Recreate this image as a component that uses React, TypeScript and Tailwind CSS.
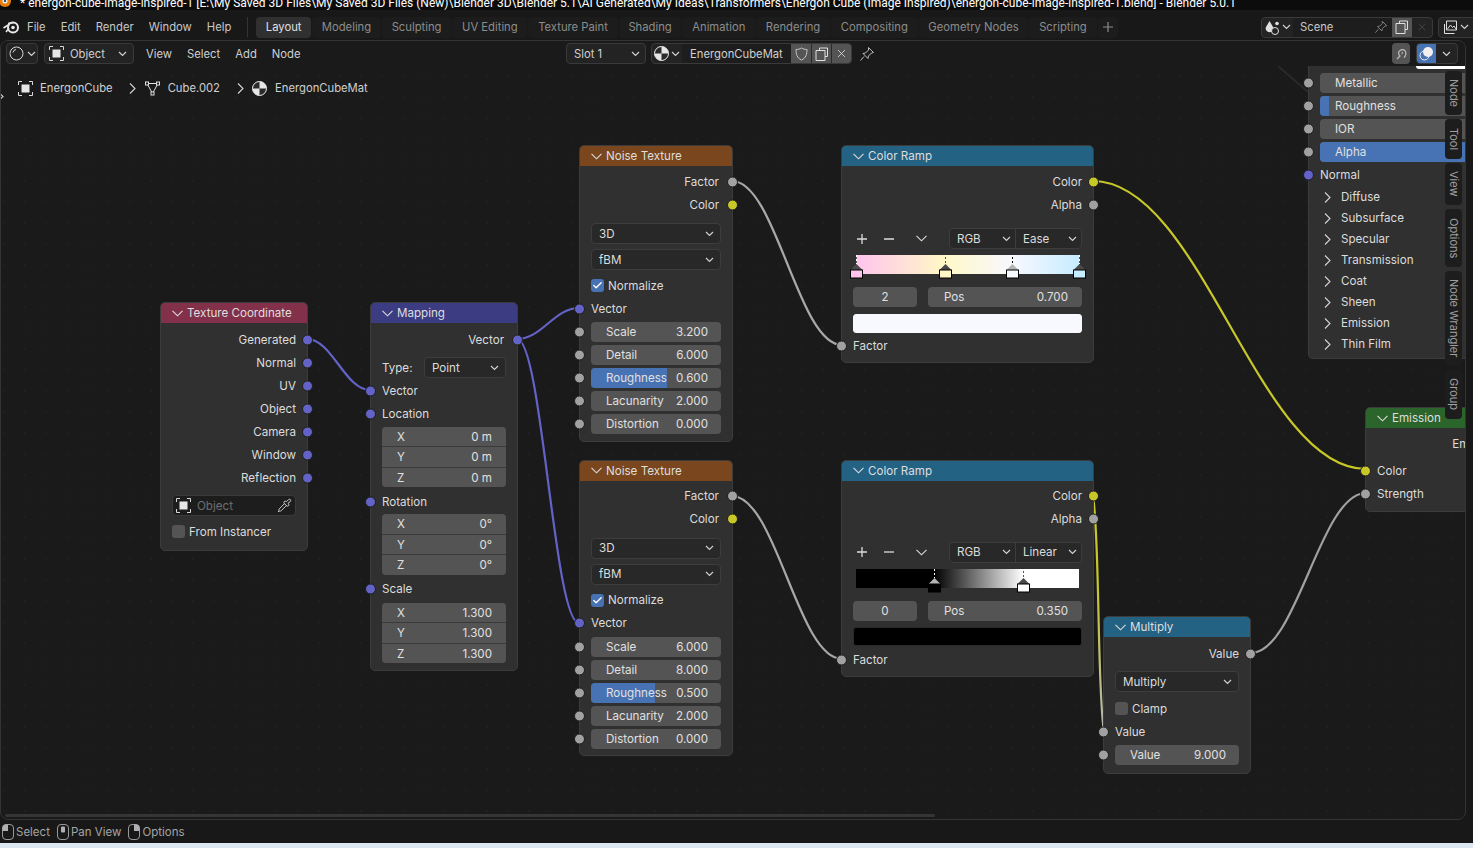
import type { ReactNode } from 'react';
import { Check, Pipette, X } from 'lucide-react';

const socketColors = {
  vector: 'bg-[#6363c7]',
  value: 'bg-[#a1a1a1]',
  color: 'bg-[#c7c729]',
};

type SocketType = keyof typeof socketColors;

function Socket({ type, side }: { type: SocketType; side: 'in' | 'out' }) {
  return (
    <span
      className={`absolute top-1/2 -translate-y-1/2 w-[11px] h-[11px] rounded-full border border-[#1e1e1e] ${socketColors[type]} ${
        side === 'in' ? 'left-[-6.5px]' : 'right-[-6px]'
      }`}
    />
  );
}

function Chev() {
  return (
    <svg width="9" height="6" viewBox="0 0 9 6" className="shrink-0">
      <path d="M1 1l3.5 3.5L8 1" fill="none" stroke="#d0d0d0" strokeWidth="1.2" />
    </svg>
  );
}

function WideChev({ className = '' }: { className?: string }) {
  return (
    <svg width="11" height="7" viewBox="0 0 11 7" className={`shrink-0 ${className}`}>
      <path d="M.5 .8l5 5 5-5" fill="none" stroke="#dcdcdc" strokeWidth="1.1" />
    </svg>
  );
}

function RightChev({ className = '' }: { className?: string }) {
  return (
    <svg width="7" height="11" viewBox="0 0 7 11" className={`shrink-0 ${className}`}>
      <path d="M1 .5l5 5-5 5" fill="none" stroke="#d4d4d4" strokeWidth="1.1" />
    </svg>
  );
}

function ObjectIcon({ className = '' }: { className?: string }) {
  return (
    <svg width="15" height="15" viewBox="0 0 15 15" className={className}>
      <path d="M.5 4V.5H4M11 .5h3.5V4M14.500 11v3.500H11M4 14.500H.5V11" fill="none" stroke="#d8d8d8" />
      <rect x="3.5" y="3.5" width="8" height="8" fill="#e6e6e6" />
    </svg>
  );
}

function MaterialIcon() {
  return (
    <svg width="15" height="15" viewBox="0 0 15 15" className="shrink-0">
      <circle cx="7.5" cy="7.5" r="7" fill="#e6e6e6" />
      <path d="M7.5.5a7 7 0 0 0-7 7h7zM7.5 14.500a7 7 0 0 0 7-7h-7z" fill="#2a2a2a" />
      <circle cx="7.5" cy="7.5" r="7" fill="none" stroke="#e6e6e6" />
    </svg>
  );
}

function MeshIcon() {
  return (
    <svg width="15" height="15" viewBox="0 0 15 15" fill="none" stroke="#e0e0e0" className="shrink-0">
      <path d="M2 2.500h11L7.500 12.500z" />
      <rect x=".5" y="1" width="3" height="3" fill="#1a1a1a" />
      <rect x="11.5" y="1" width="3" height="3" fill="#1a1a1a" />
      <rect x="6" y="11" width="3" height="3" fill="#1a1a1a" />
    </svg>
  );
}

function MouseIcon({ part }: { part: 'left' | 'middle' | 'right' }) {
  return (
    <svg width="12" height="16" viewBox="0 0 12 16" className="shrink-0">
      <rect x=".5" y=".5" width="11" height="15" rx="3.500" fill="none" stroke="#9a9a9a" />
      {part === 'left' && <path d="M.5 7V4a3.500 3.500 0 0 1 3.500-3.500H6V7z" fill="#b0b0b0" />}
      {part === 'right' && <path d="M11.500 7V4A3.500 3.500 0 0 0 8 .5H6V7z" fill="#b0b0b0" />}
      {part === 'middle' && <rect x="4" y="2.500" width="4" height="6" rx="1" fill="#b0b0b0" />}
    </svg>
  );
}

function Node({ pos, header, title, children }: { pos: string; header: string; title: string; children: ReactNode }) {
  return (
    <div className={`absolute ${pos} rounded-[5px] border border-[#3c3c3c] bg-[#303030] text-[11.6px]`}>
      <div className={`flex items-center h-[20px] pl-[11px] gap-[4px] rounded-t-[4px] ${header}`}>
        <WideChev />
        <span className="text-[#dedede]">{title}</span>
      </div>
      {children}
    </div>
  );
}

function Row({ label, socket, side = 'in', className = '' }: { label: string; socket?: SocketType; side?: 'in' | 'out'; className?: string }) {
  return (
    <div className={`relative flex items-center h-[23.1px] px-[11px] text-[#dcdcdc] ${side === 'out' ? 'justify-end' : ''} ${className}`}>
      <span>{label}</span>
      {socket && <Socket type={socket} side={side} />}
    </div>
  );
}

function Select({ label, className = '' }: { label: string; className?: string }) {
  return (
    <div className={`flex items-center justify-between h-[21px] pl-[7px] pr-[6px] rounded-[4px] bg-[#282828] border border-[#3d3d3d] text-[#dcdcdc] ${className}`}>
      <span>{label}</span>
      <Chev />
    </div>
  );
}

function NumberRow({ label, value, fill = '' }: { label: string; value: string; fill?: string }) {
  return (
    <div className="relative flex items-center h-[23.1px] px-[11px]">
      <Socket type="value" side="in" />
      <div className="relative flex items-center justify-between w-full h-[20px] pl-[15px] pr-[13px] rounded-[4px] bg-[#545454] overflow-hidden text-[#e0e0e0]">
        {fill && <span className={`absolute left-0 top-0 bottom-0 bg-[#4772b3] ${fill}`} />}
        <span className="relative">{label}</span>
        <span className="relative">{value}</span>
      </div>
    </div>
  );
}

function VectorGroup({ values, className = '' }: { values: string[]; className?: string }) {
  return (
    <div className={`mx-[11px] rounded-[4px] overflow-hidden flex flex-col gap-[1px] bg-[#3a3a3a] text-[#e0e0e0] ${className}`}>
      {['X', 'Y', 'Z'].map((axis, i) => (
        <div key={axis} className="flex items-center justify-between h-[19.5px] pl-[15px] pr-[14px] bg-[#545454]">
          <span>{axis}</span>
          <span>{values[i]}</span>
        </div>
      ))}
    </div>
  );
}

function CheckRow({ label, checked }: { label: string; checked?: boolean }) {
  return (
    <div className="flex items-center gap-[4px] h-[23.1px] px-[11px] text-[#dcdcdc]">
      <span className={`flex items-center justify-center w-[13px] h-[13px] rounded-[3px] ${checked ? 'bg-[#4772b3]' : 'bg-[#545454]'}`}>
        {checked && <Check className="w-[11px] h-[11px] text-white" strokeWidth={3} />}
      </span>
      <span>{label}</span>
    </div>
  );
}

function NoiseNode({ pos, scale, detail, rough, fill }: { pos: string; scale: string; detail: string; rough: string; fill: string }) {
  return (
    <Node pos={pos} header="bg-[#79461d]" title="Noise Texture">
      <div className="pt-[4px] pb-[5px]">
        <Row label="Factor" socket="value" side="out" className="pr-[13px]" />
        <Row label="Color" socket="color" side="out" className="pr-[13px]" />
        <div className="flex flex-col gap-[5px] mx-[11px] mt-[7px]">
          <Select label="3D" />
          <Select label="fBM" />
        </div>
        <div className="mt-[4px]">
          <CheckRow label="Normalize" checked />
        </div>
        <Row label="Vector" socket="vector" />
        <NumberRow label="Scale" value={scale} />
        <NumberRow label="Detail" value={detail} />
        <NumberRow label="Roughness" value={rough} fill={fill} />
        <NumberRow label="Lacunarity" value="2.000" />
        <NumberRow label="Distortion" value="0.000" />
      </div>
    </Node>
  );
}

function Stop({ pos, fill, active }: { pos: string; fill: string; active?: boolean }) {
  return (
    <svg width="13" height="24" viewBox="0 0 13 24" className={`absolute top-0 ${pos}`}>
      <path d="M6.500 0v9" stroke={active ? '#000' : '#555'} />
      <path d="M6.500 0v9" stroke="#fff" strokeDasharray="2 2" />
      <path d="M6.500 9L.5 15h12z" fill={active ? '#b4b4b4' : '#4a4a4a'} />
      <rect x=".5" y="15" width="12" height="8" fill={fill} stroke="#000" />
    </svg>
  );
}

function RampNode({
  pos,
  mode,
  ramp,
  stops,
  index,
  position,
  swatch,
  controlsGap,
  factorGap,
}: {
  pos: string;
  mode: string;
  ramp: string;
  stops: ReactNode;
  index: string;
  position: string;
  swatch: string;
  controlsGap: string;
  factorGap: string;
}) {
  return (
    <Node pos={pos} header="bg-[#246283]" title="Color Ramp">
      <div className="pt-[4px] pb-[5px]">
        <Row label="Color" socket="color" side="out" />
        <Row label="Alpha" socket="value" side="out" />
        <div className={`flex items-center h-[21px] pl-[15px] pr-[11px] text-[#dcdcdc] ${controlsGap}`}>
          <svg width="10" height="10" viewBox="0 0 10 10" stroke="#dcdcdc" strokeWidth="1.3" className="shrink-0">
            <path d="M0 5h10M5 0v10" />
          </svg>
          <svg width="10" height="10" viewBox="0 0 10 10" stroke="#dcdcdc" strokeWidth="1.3" className="shrink-0 ml-[17px]">
            <path d="M0 5h10" />
          </svg>
          <WideChev className="ml-[22px]" />
          <div className="flex ml-auto w-[133px] h-[21px] rounded-[4px] bg-[#282828] border border-[#3d3d3d]">
            <div className="flex flex-1 items-center justify-between pl-[7px] pr-[4px] border-r border-[#3d3d3d]">
              <span>RGB</span>
              <Chev />
            </div>
            <div className="flex flex-1 items-center justify-between pl-[7px] pr-[4px]">
              <span>{mode}</span>
              <Chev />
            </div>
          </div>
        </div>
        <div className={`relative h-[19px] mt-[6px] ml-[14px] mr-[14px] ${ramp}`}>{stops}</div>
        <div className="flex gap-[11px] mx-[11px] mt-[13px] text-[#e0e0e0]">
          <div className="flex items-center justify-center w-[64px] h-[20px] rounded-[4px] bg-[#545454]">{index}</div>
          <div className="flex flex-1 items-center justify-between h-[20px] pl-[16px] pr-[14px] rounded-[4px] bg-[#545454]">
            <span>Pos</span>
            <span>{position}</span>
          </div>
        </div>
        <div className={`h-[19px] mx-[11px] mt-[6.5px] rounded-[3px] border ${swatch}`} />
        <Row label="Factor" socket="value" className={factorGap} />
      </div>
    </Node>
  );
}

function Link({ d, stroke }: { d: string; stroke: string }) {
  return <path d={d} fill="none" stroke={stroke} strokeWidth="2.2" strokeLinecap="round" />;
}

function Links() {
  return (
    <svg width="1473" height="848" viewBox="0 0 1473 848" className="absolute left-0 top-0">
      <defs>
        <linearGradient id="yellowGrey" gradientUnits="userSpaceOnUse" x1="0" y1="500" x2="0" y2="731">
          <stop offset="0.35" stopColor="#c7c729" />
          <stop offset="1" stopColor="#b5b5b5" />
        </linearGradient>
      </defs>
      <path d="M1278 66L1308 92" stroke="#2a2a2a" strokeWidth="2" />
      <Link d="M307 339C332 339 345 390 370 390" stroke="#6363c7" />
      <Link d="M517 339C542 339 554 308 579 308" stroke="#6363c7" />
      <Link d="M517 339C542 339 554 623 579 623" stroke="#6363c7" />
      <Link d="M732 181C776 181 798 345 842 345" stroke="#a8a8a8" />
      <Link d="M732 496C776 496 798 659 842 659" stroke="#a8a8a8" />
      <Link d="M1093 181C1201 181 1258 469 1366 469" stroke="#c7c729" />
      <Link d="M1251 653C1297 653 1320 493 1366 493" stroke="#a1a1a1" />
      <Link d="M1093 496C1100 540 1097 690 1104 731" stroke="url(#yellowGrey)" />
    </svg>
  );
}

function SideTabs() {
  const tabs = [
    { label: 'Node', h: 'h-[44px]' },
    { label: 'Tool', h: 'h-[40px]' },
    { label: 'View', h: 'h-[42px]' },
    { label: 'Options', h: 'h-[58px]' },
    { label: 'Node Wrangler', h: 'h-[95px]' },
    { label: 'Group', h: 'h-[49px]' },
  ];
  return (
    <div className="absolute left-[1445px] top-[71px] flex flex-col gap-[4px]">
      {tabs.map((tab) => (
        <div
          key={tab.label}
          className={`flex items-center justify-center w-[17px] rounded-[4px] bg-[#1d1d1d] text-[#a0a0a0] text-[11px] [writing-mode:vertical-rl] ${tab.h}`}
        >
          {tab.label}
        </div>
      ))}
    </div>
  );
}

function PrincipledPanel() {
  return (
    <div className="absolute left-[1308px] top-[66px] w-[220px] pt-[5.5px] pb-[3px] rounded-b-[5px] border border-t-0 border-[#3c3c3c] bg-[#303030] text-[11.6px]">
      {[
        { label: 'Metallic', fill: '' },
        { label: 'Roughness', fill: 'w-[9px]' },
        { label: 'IOR', fill: '' },
        { label: 'Alpha', fill: 'w-full' },
      ].map((r) => (
        <NumberRow key={r.label} label={r.label} value="" fill={r.fill} />
      ))}
      <Row label="Normal" socket="vector" />
      {['Diffuse', 'Subsurface', 'Specular', 'Transmission', 'Coat', 'Sheen', 'Emission', 'Thin Film'].map((s) => (
        <div key={s} className="flex items-center h-[21px] pl-[15px] gap-[10px] text-[#dcdcdc]">
          <RightChev />
          <span>{s}</span>
        </div>
      ))}
    </div>
  );
}

function TexCoordNode() {
  return (
    <Node pos="left-[160px] top-[302px] w-[148px]" header="bg-[#83314a]" title="Texture Coordinate">
      <div className="pt-[5px] pb-[7px]">
        {['Generated', 'Normal', 'UV', 'Object', 'Camera', 'Window', 'Reflection'].map((s) => (
          <Row key={s} label={s} socket="vector" side="out" className="h-[23px]" />
        ))}
        <div className="flex items-center justify-between h-[21px] mx-[11px] mt-[6px] px-[3px] rounded-[4px] bg-[#1d1d1d] border border-[#3a3a3a]">
          <span className="flex items-center gap-[6px] text-[#6e6e6e]">
            <ObjectIcon />
            Object
          </span>
          <Pipette className="w-[15px] h-[15px] text-[#d8d8d8]" strokeWidth={1.5} />
        </div>
        <div className="mt-[4px]">
          <CheckRow label="From Instancer" />
        </div>
      </div>
    </Node>
  );
}

function MappingNode() {
  return (
    <Node pos="left-[370px] top-[302px] w-[148px]" header="bg-[#3c3c83]" title="Mapping">
      <div className="pt-[5px] pb-[7px]">
        <Row label="Vector" socket="vector" side="out" className="pr-[13px]" />
        <div className="flex items-center justify-between h-[21px] mx-[11px] mt-[6px] text-[#dcdcdc]">
          <span>Type:</span>
          <Select label="Point" className="w-[82px]" />
        </div>
        <Row label="Vector" socket="vector" className="mt-[1px]" />
        <Row label="Location" socket="vector" />
        <VectorGroup values={['0 m', '0 m', '0 m']} className="mt-[1.5px]" />
        <Row label="Rotation" socket="vector" className="mt-[3px]" />
        <VectorGroup values={['0°', '0°', '0°']} className="mt-[1px]" />
        <Row label="Scale" socket="vector" className="mt-[3px]" />
        <VectorGroup values={['1.300', '1.300', '1.300']} className="mt-[2px]" />
      </div>
    </Node>
  );
}

function MultiplyNode() {
  return (
    <Node pos="left-[1103px] top-[616px] w-[148px]" header="bg-[#246283]" title="Multiply">
      <div className="pt-[5px] pb-[7px]">
        <Row label="Value" socket="value" side="out" />
        <Select label="Multiply" className="mx-[11px] mt-[6px]" />
        <div className="mt-[5px]">
          <CheckRow label="Clamp" />
        </div>
        <Row label="Value" socket="value" />
        <NumberRow label="Value" value="9.000" />
      </div>
    </Node>
  );
}

function EmissionNode() {
  return (
    <Node pos="left-[1365px] top-[407px] w-[148px]" header="bg-[#2b652b]" title="Emission">
      <div className="pt-[4px] pb-[6px]">
        <Row label="Emission" side="out" />
        <Row label="Color" socket="color" className="mt-[4px]" />
        <Row label="Strength" socket="value" />
      </div>
    </Node>
  );
}

function Canvas() {
  return (
    <div className="absolute left-[-1px] top-[-41px] w-[1473px] h-[848px] bg-[radial-gradient(circle,#2e2e2e_0.7px,transparent_1px)] bg-[size:21px_21px] bg-[position:-6.5px_2.5px]">
      <Links />
      <TexCoordNode />
      <MappingNode />
      <NoiseNode pos="left-[579px] top-[145px] w-[154px]" scale="3.200" detail="6.000" rough="0.600" fill="w-[76px]" />
      <NoiseNode pos="left-[579px] top-[459.6px] w-[154px]" scale="6.000" detail="8.000" rough="0.500" fill="w-[64px]" />
      <RampNode
        pos="left-[841px] top-[145px] w-[253px]"
        mode="Ease"
        ramp="bg-[linear-gradient(90deg,#ffc4ee_0%,#fff8c6_39.5%,#f8f8ff_70%,#c6ecff_100%)]"
        index="2"
        position="0.700"
        swatch="bg-[#f8f8ff] border-[#f8f8ff]"
        controlsGap="mt-[12px]"
        factorGap="mt-[1.5px]"
        stops={
          <>
            <Stop pos="left-[-6px]" fill="#ffc4ee" />
            <Stop pos="left-[82.5px]" fill="#fff8c6" />
            <Stop pos="left-[149.5px]" fill="#f8f8ff" active />
            <Stop pos="left-[216.5px]" fill="#c6ecff" />
          </>
        }
      />
      <RampNode
        pos="left-[841px] top-[459.6px] w-[253px]"
        mode="Linear"
        ramp="bg-[linear-gradient(90deg,#000_35%,#fff_75%)]"
        index="0"
        position="0.350"
        swatch="bg-black border-[#2a2a2a]"
        controlsGap="mt-[11px]"
        factorGap="mt-[2px]"
        stops={
          <>
            <Stop pos="left-[71.5px]" fill="#000" active />
            <Stop pos="left-[160.5px]" fill="#fff" />
          </>
        }
      />
      <MultiplyNode />
      <EmissionNode />
      <PrincipledPanel />
      <SideTabs />
      <div className="absolute left-[5px] top-[814px] w-[930px] h-[3px] rounded-full bg-[#353535]" />
    </div>
  );
}

function EditorHeader() {
  return (
    <div className="relative flex items-center h-[25px] bg-[#1a1a1a] text-[#d0d0d0] text-[11.25px]">
      <div className="flex items-center w-[565px] shrink-0 pl-[5px]">
        <div className="flex items-center justify-center gap-[3px] w-[32px] h-[21px] rounded-[4px] bg-[#232323] border border-[#3a3a3a]">
          <svg width="15" height="15" viewBox="0 0 15 15" fill="none" stroke="#d8d8d8">
            <circle cx="7.500" cy="7.500" r="6.500" />
            <path d="M4 6.500a3.500 3.500 0 0 1 3-3" />
          </svg>
          <Chev />
        </div>
        <div className="flex items-center w-[90px] h-[21px] ml-[6px] pl-[4px] pr-[6px] rounded-[4px] bg-[#232323] border border-[#3a3a3a]">
          <ObjectIcon />
          <span className="ml-[6px]">Object</span>
          <span className="ml-auto">
            <Chev />
          </span>
        </div>
        <div className="flex gap-[15px] ml-[12px]">
          <span>View</span>
          <span>Select</span>
          <span>Add</span>
          <span>Node</span>
        </div>
      </div>
      <div className="flex items-center justify-between shrink-0 w-[80px] h-[21px] pl-[7px] pr-[5px] rounded-[4px] bg-[#232323] border border-[#3a3a3a]">
        <span>Slot 1</span>
        <Chev />
      </div>
      <div className="flex items-center shrink-0 h-[21px] ml-[5px] rounded-[4px] bg-[#232323] border border-[#3a3a3a] overflow-hidden">
        <div className="flex items-center justify-center gap-[2px] w-[30px]">
          <MaterialIcon />
          <Chev />
        </div>
        <span className="w-[109px] pl-[8px] h-full flex items-center bg-[#1d1d1d]">EnergonCubeMat</span>
        <div className="flex items-center justify-center w-[20px] h-full bg-[#545454]">
          <svg width="13" height="14" viewBox="0 0 13 14" fill="none" stroke="#c8c8c8">
            <path d="M6.500 1C5 2 3 2.500 1 2.500c0 4.500 1 8.500 5.500 10.500C11 11 12 7 12 2.500c-2 0-4-.5-5.500-1.500z" />
          </svg>
        </div>
        <div className="flex items-center justify-center w-[20px] h-full bg-[#545454] border-l border-[#2a2a2a]">
          <svg width="14" height="14" viewBox="0 0 14 14" fill="none" stroke="#e0e0e0">
            <path d="M4.500 3.500V1h8v8.500H10M1 3.500h9v10H1z" />
          </svg>
        </div>
        <div className="flex items-center justify-center w-[20px] h-full bg-[#545454] border-l border-[#2a2a2a]">
          <X className="w-[13px] h-[13px] text-[#e0e0e0]" strokeWidth={1.5} />
        </div>
      </div>
      <svg width="16" height="16" viewBox="0 0 16 16" fill="none" stroke="#bdbdbd" className="ml-[7px] shrink-0">
        <path d="M9.500 1.500l5 5-2 .5-3 3-.5 2.500-5-5 2.500-.5 3-3zM5 10.500l-3.500 4" />
      </svg>
      <div className="flex items-center ml-auto mr-[7px]">
        <div className="flex items-center justify-center w-[18px] h-[21px] rounded-[4px] bg-[#545454]">
          <svg width="14" height="14" viewBox="0 0 14 14" fill="none" stroke="#bdbdbd" strokeWidth="1.2">
            <path d="M3 12L6 9C4 7 4 5 6 3.500c2-1.500 4.500-1 5.500 1 1 2 .5 3.500-.5 5l-1 1M8 7c.5-1 .5-1.500 0-2" />
          </svg>
        </div>
        <div className="flex items-center h-[21px] ml-[6px] rounded-[4px] bg-[#232323] border border-[#3a3a3a] overflow-hidden">
          <div className="flex items-center justify-center w-[19px] h-full bg-[#4772b3]">
            <svg width="15" height="15" viewBox="0 0 15 15">
              <circle cx="9" cy="6" r="5" fill="#f0f0f0" />
              <circle cx="5.500" cy="9.500" r="4.500" fill="none" stroke="#f0f0f0" />
            </svg>
          </div>
          <div className="flex items-center justify-center w-[21px] h-full">
            <Chev />
          </div>
        </div>
      </div>
      <div className="absolute left-[1415px] top-[25px] w-[50px] h-[3px] rounded-bl-[3px] bg-white" />
    </div>
  );
}

function TopBar() {
  const tabs = ['Modeling', 'Sculpting', 'UV Editing', 'Texture Paint', 'Shading', 'Animation', 'Rendering', 'Compositing', 'Geometry Nodes', 'Scripting'];
  return (
    <div className="flex items-center h-[30px] pt-[4px] bg-[#181818] text-[#c8c8c8] text-[11.25px]">
      <svg width="16" height="14" viewBox="0 0 16 14" className="ml-[3px] shrink-0">
        <circle cx="10" cy="7.500" r="5" fill="none" stroke="#e8e8e8" strokeWidth="2" />
        <circle cx="10" cy="7.500" r="1.800" fill="#e8e8e8" />
        <path d="M5 3.500L10 2.500M.5 8L6 4.500M3 12L6 8" stroke="#e8e8e8" strokeWidth="1.600" fill="none" />
      </svg>
      <div className="flex gap-[15px] ml-[8px]">
        <span>File</span>
        <span>Edit</span>
        <span>Render</span>
        <span>Window</span>
        <span>Help</span>
      </div>
      <span className="w-px h-[20px] ml-[16px] bg-[#333333]" />
      <div className="flex items-center h-[21px] ml-[8px] gap-[1px]">
        <span className="flex items-center h-full px-[9.5px] rounded-[4px] bg-[#303030] text-[#e0e0e0]">Layout</span>
        {tabs.map((t) => (
          <span key={t} className="flex items-center h-full px-[9.75px] rounded-[4px] bg-[#1c1c1c] text-[#8c8c8c]">
            {t}
          </span>
        ))}
        <span className="flex items-center justify-center w-[20px] h-full rounded-[4px] bg-[#1c1c1c]">
          <svg width="10" height="10" viewBox="0 0 10 10" stroke="#8c8c8c" strokeWidth="1.2">
            <path d="M0 5h10M5 0v10" />
          </svg>
        </span>
      </div>
      <div className="flex items-center ml-auto h-[21px]">
        <div className="flex items-center w-[172px] h-full rounded-[4px] bg-[#232323] border border-[#3a3a3a] overflow-hidden">
          <div className="flex items-center justify-center gap-[2px] w-[31px]">
            <svg width="15" height="15" viewBox="0 0 15 15">
              <path d="M4.500 1L8 7a3.800 3.800 0 1 1-7 0z" fill="#e0e0e0" />
              <circle cx="12" cy="3.500" r="1.800" fill="#e0e0e0" />
              <circle cx="10" cy="11" r="3.500" fill="#232323" stroke="#e0e0e0" />
            </svg>
            <Chev />
          </div>
          <span className="flex flex-1 items-center justify-between h-full pl-[7px] pr-[4px] bg-[#1d1d1d]">
            Scene
            <svg width="14" height="14" viewBox="0 0 16 16" fill="none" stroke="#8c8c8c">
              <path d="M9.500 1.500l5 5-2 .5-3 3-.5 2.500-5-5 2.500-.5 3-3zM5 10.500l-3.500 4" />
            </svg>
          </span>
          <div className="flex items-center justify-center w-[20px] h-full bg-[#545454]">
            <svg width="14" height="14" viewBox="0 0 14 14" fill="none" stroke="#e0e0e0">
              <path d="M4.500 3.500V1h8v8.500H10M1 3.500h9v10H1z" />
            </svg>
          </div>
          <div className="flex items-center justify-center w-[20px] h-full">
            <X className="w-[12px] h-[12px] text-[#4e4e4e]" strokeWidth={1.5} />
          </div>
        </div>
        <div className="flex items-center gap-[2px] w-[40px] h-full ml-[5px] mr-[-5px] pl-[4px] rounded-l-[4px] bg-[#232323] border border-[#3a3a3a]">
          <svg width="15" height="15" viewBox="0 0 15 15" fill="none" stroke="#e0e0e0">
            <path d="M3.500 1h10v9h-10zM1.500 4v9.500h10" />
            <path d="M4.500 9l3-4 2 2.500 1.500-1.500 2 3" />
          </svg>
          <Chev />
        </div>
      </div>
    </div>
  );
}

export default function App() {
  return (
    <div className="flex flex-col w-[1473px] h-[848px] overflow-hidden bg-[#181818] [font-family:Inter,sans-serif] text-[12px] leading-[14px]">
      <div className="relative flex items-end h-[10px] pl-[20px] bg-[#0c0c0c] overflow-hidden">
        <svg width="14" height="14" viewBox="0 0 14 14" className="absolute left-[-2px] top-[-6px]">
          <circle cx="7" cy="7" r="6" fill="#e87d0d" />
          <circle cx="7" cy="7" r="2.500" fill="#f4f4f4" />
          <circle cx="7" cy="7" r="1.200" fill="#265787" />
        </svg>
        <span className="whitespace-nowrap text-white text-[12px] [font-family:Roboto,sans-serif] leading-[16px] mb-[-1px]">
          * energon-cube-image-inspired-1 [E:\My Saved 3D Files\My Saved 3D Files (New)\Blender 3D\Blender 5.1\AI Generated\My Ideas\Transformers\Energon Cube (Image Inspired)\energon-cube-image-inspired-1.blend] - Blender 5.0.1
        </span>
      </div>
      <TopBar />
      <div className="relative flex-1 mr-[7px] rounded-[8px] border border-[#343434] overflow-hidden bg-[#1a1a1a]">
        <Canvas />
        <EditorHeader />
        {/* breadcrumb */}
        <div className="absolute left-[17px] top-[39px] flex items-center h-[16px] text-[#d0d0d0] text-[11.25px]">
          <ObjectIcon />
          <span className="ml-[7px]">EnergonCube</span>
          <RightChev className="ml-[16px]" />
          <span className="ml-[9px]">
            <MeshIcon />
          </span>
          <span className="ml-[8px]">Cube.002</span>
          <RightChev className="ml-[17px]" />
          <span className="ml-[8px]">
            <MaterialIcon />
          </span>
          <span className="ml-[8px]">EnergonCubeMat</span>
        </div>
        <RightChev className="absolute left-[-4px] top-[50px]" />
      </div>
      <div className="flex items-center h-[23px] pl-[2px] pt-[1px] gap-[7px] bg-[#181818] text-[#a4a4a4] text-[11.5px]">
        <span className="flex items-center gap-[2px]">
          <MouseIcon part="left" />
          Select
        </span>
        <span className="flex items-center gap-[2px]">
          <MouseIcon part="middle" />
          Pan View
        </span>
        <span className="flex items-center gap-[2px]">
          <MouseIcon part="right" />
          Options
        </span>
      </div>
      <div className="h-[5px] bg-[#dde7f1]" />
    </div>
  );
}
